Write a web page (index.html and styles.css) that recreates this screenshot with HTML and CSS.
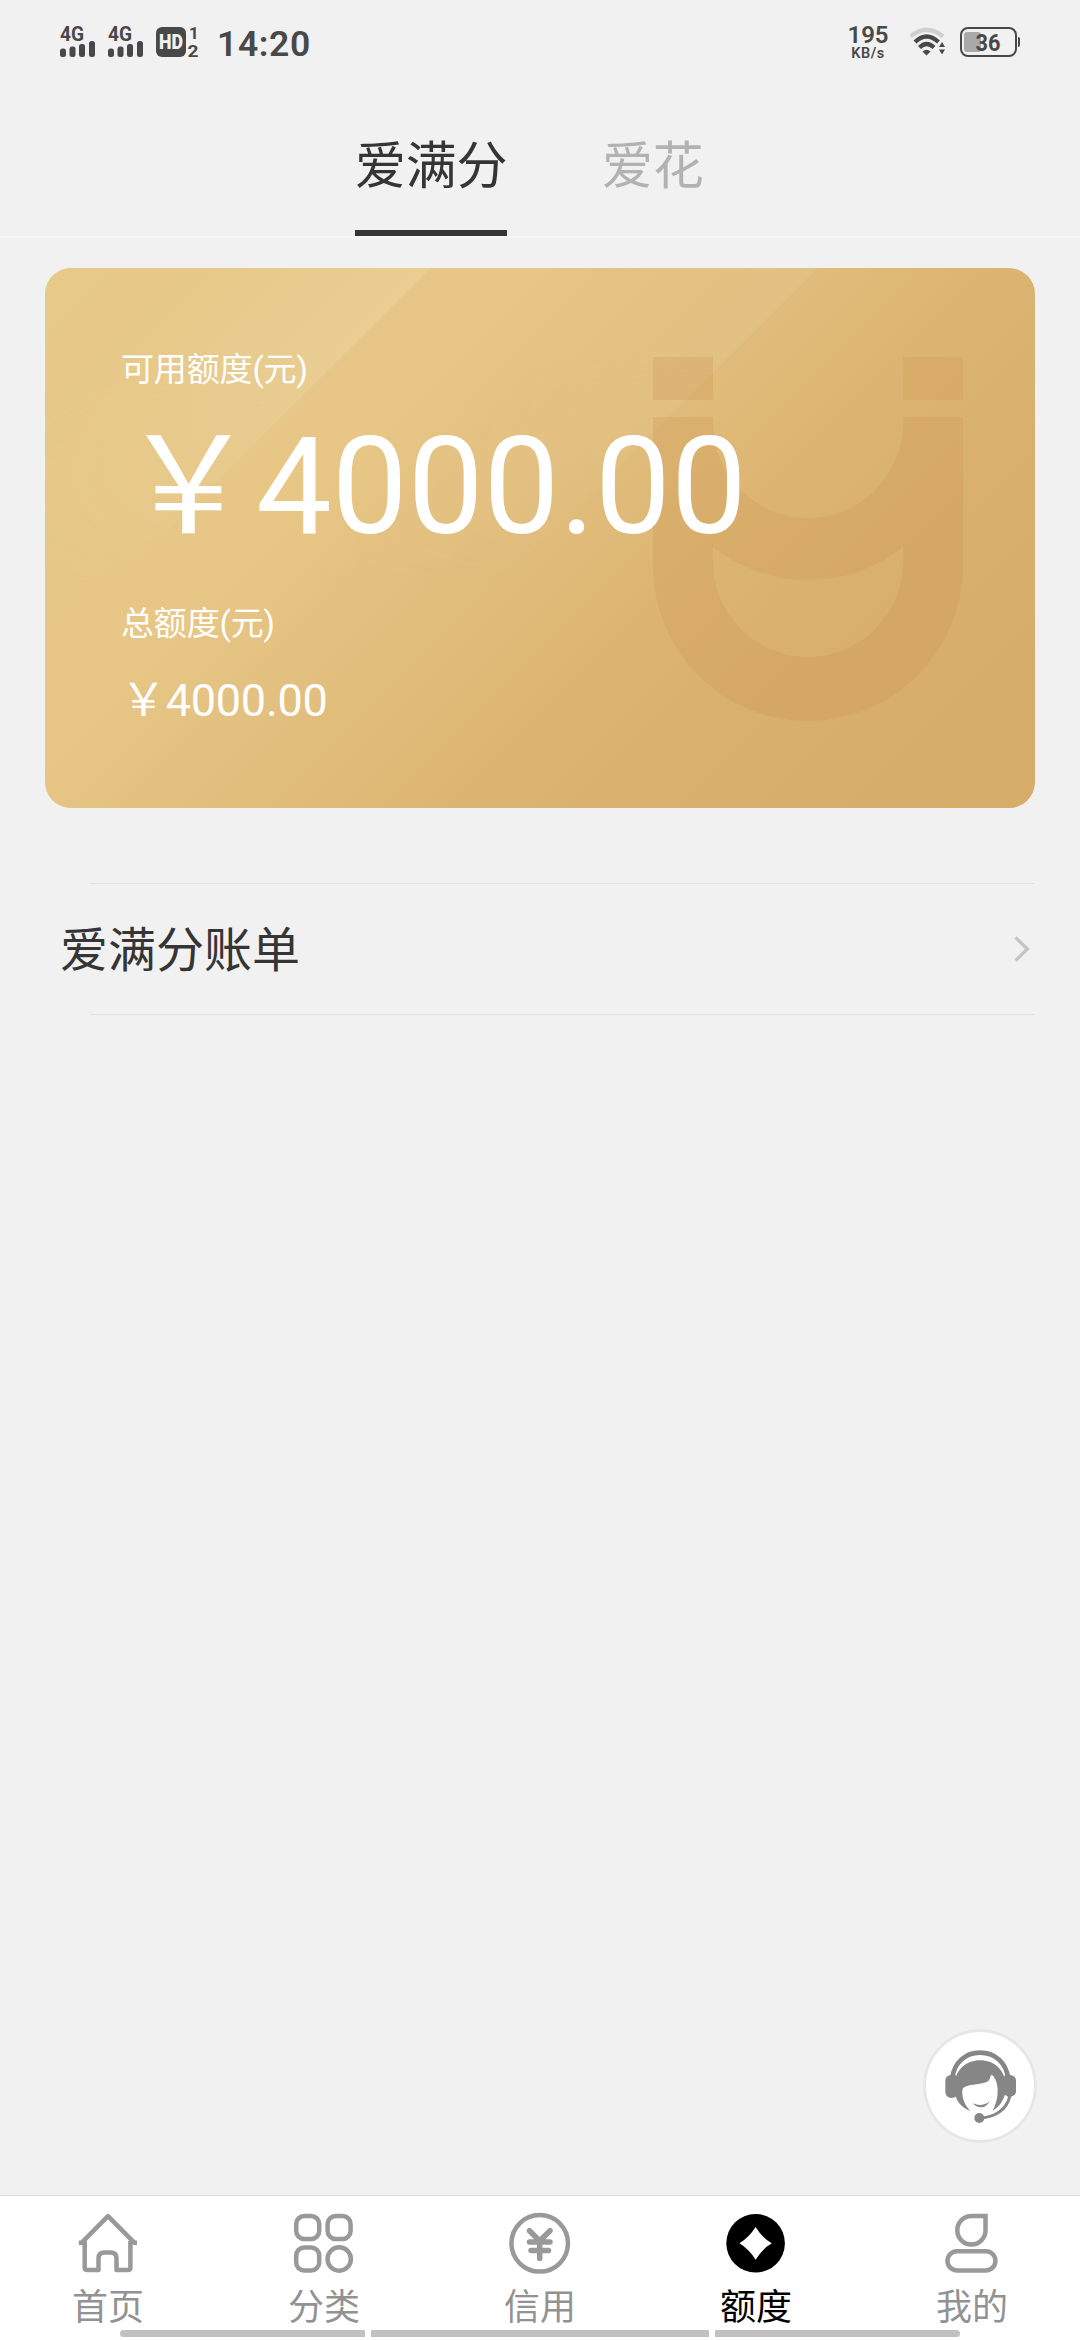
FILE: index.html
```html
<!DOCTYPE html>
<html lang="zh-CN">
<head>
<meta charset="utf-8">
<title>额度</title>
<link rel="stylesheet" href="styles.css">
</head>
<body>
<div class="screen">
  <header class="status">
    <svg class="signal" viewBox="0 0 36 38"><text class="net" x="0" y="18" textLength="24" lengthAdjust="spacingAndGlyphs">4G</text><rect x="0" y="25.500" width="6" height="8.500" rx="2.500"/><rect x="9.500" y="23.500" width="6" height="10.500" rx="2.500"/><rect x="19" y="21" width="6" height="13" rx="2.500"/><rect x="29" y="18" width="6" height="16" rx="2.500"/></svg>
    <svg class="signal signal-second" viewBox="0 0 36 38"><text class="net" x="0" y="18" textLength="24" lengthAdjust="spacingAndGlyphs">4G</text><rect x="0" y="25.500" width="6" height="8.500" rx="2.500"/><rect x="9.500" y="23.500" width="6" height="10.500" rx="2.500"/><rect x="19" y="21" width="6" height="13" rx="2.500"/><rect x="29" y="18" width="6" height="16" rx="2.500"/></svg>
    <svg class="hd" viewBox="0 0 44 38"><rect x="0" y="4" width="30" height="30" rx="6"/><text class="hd-text" x="3" y="26" textLength="24" lengthAdjust="spacingAndGlyphs">HD</text><text class="hd-num" x="33" y="16">1</text><text class="hd-num" x="31.500" y="33.500" textLength="11" lengthAdjust="spacingAndGlyphs">2</text></svg>
    <span class="clock">14:20</span>
    <div class="speed"><span class="speed-num">195</span><span class="speed-unit">KB/s</span></div>
    <svg class="wifi" viewBox="0 0 38 30"><g fill="none" stroke-width="4.200"><path d="M1.500 9.500 Q17.500 -4 34 9.500" stroke="#d0d0d0"/><path d="M6 15 Q17.500 4 29.500 15" stroke="#484848"/><path d="M10.500 20.500 Q17.500 13.500 25 20.500" stroke="#484848"/></g><path d="M13.500 24.500 Q17.500 21 21.500 24.500 L17.500 28.500Z"/><path d="M30 20 L33 15 L36 20ZM30 22.500 L33 27.500 L36 22.500Z"/></svg>
    <svg class="battery" viewBox="0 0 60 30"><rect x="4" y="5" width="17" height="20" rx="3" fill="#a9a9a9"/><rect x="1" y="1" width="55" height="28" rx="7" fill="none" stroke="#484848" stroke-width="2"/><path d="M58 10 q2 0 2 2 v6 q0 2 -2 2z"/><text class="level" x="15.500" y="23.500" textLength="25" lengthAdjust="spacingAndGlyphs">36</text></svg>
  </header>

  <nav class="tabs">
    <span class="tab tab-active">爱满分</span>
    <span class="tab">爱花</span>
  </nav>

  <main class="content">
    <section class="card">
      <svg class="card-logo" viewBox="0 0 310 364"><path d="M0 0H60V43H0ZM250 0H310V43H250ZM0 60H60V66A95 95 0 0 0 250 66V60H310V209A155 155 0 0 1 0 209ZM60 190V205A95 95 0 0 0 250 205V190A152.500 152.500 0 0 1 60 190Z" fill-rule="evenodd"/></svg>
      <p class="card-label">可用额度(元)</p>
      <p class="amount">&#xFFE5;4000.00</p>
      <p class="card-label card-label-total">总额度(元)</p>
      <p class="total">&#xFFE5;4000.00</p>
    </section>

    <a class="bill">
      <span>爱满分账单</span>
      <svg class="chevron" viewBox="0 0 16 26"><path d="M1.500 1.500 L13.500 13 L1.500 24.500"/></svg>
    </a>
  </main>

  <a class="service">
    <svg viewBox="68 59 342 342"><path class="stroke" d="M156 205 C162 160 195 130 239 130 C284 130 317 160 323 205" stroke-width="14"/><path d="M150 197 H163 Q169 197 169 204 V258 Q166 266 152 266 Q135 263 135 248 V212 Q136 200 150 197ZM328 196 H317 Q311 198 311 204 V252 Q313 259 324 262 H332 Q347 259 347 246 V212 Q346 199 328 196Z"/><path d="M164 220 C166 180 200 153 239 153 C280 153 312 180 315 220 V252 C309 275 295 295 277 304 C293 275 300 228 279 200 Q271 193 270 203 C267 217 259 220 238 223 C212 227 188 228 186 242 C184 268 194 288 210 305 C188 297 171 280 166 260Z"/><path d="M218 282 Q244 295 268 276 Q258 294 243 294 Q226 294 218 282Z"/><path class="stroke" d="M329 258 C320 300 286 324 240 326" stroke-width="9"/><circle cx="237" cy="326" r="15"/></svg>
  </a>

  <footer class="tabbar">
    <a class="item"><svg viewBox="0 0 72 72"><path d="M6.800 34.800 H9.500 L36 8.200 L62.500 34.800 H65M12.700 33 V59.500 Q12.700 62 15.500 62 H26.500 V50.500 Q26.500 44.500 32.500 44.500 H38.500 Q44.500 44.500 44.500 50.500 V62 H55.700 Q58.400 62 58.400 59.500 V33" stroke-linejoin="round"/></svg><span>首页</span></a>
    <a class="item"><svg viewBox="0 0 72 72"><rect x="8.200" y="8" width="23" height="23" rx="8"/><rect x="39.600" y="8" width="23" height="23" rx="8"/><rect x="8.200" y="39.500" width="23" height="23" rx="8"/><circle cx="51.200" cy="51" r="11.700"/></svg><span>分类</span></a>
    <a class="item"><svg viewBox="0 0 72 72"><circle cx="35.700" cy="35.300" r="28.300"/><path class="yen" d="M25.500 22.700 L35.700 33 L46 22.700M25.500 34 H46M27 42.500 H44.500M35.700 34 V50.500"/></svg><span>信用</span></a>
    <a class="item item-active"><svg viewBox="0 0 72 72"><circle class="solid" cx="35.600" cy="35.300" r="29.300"/><path class="hole" d="M35.600 19 Q42 29.500 51.800 35.300 Q42 41 35.600 51.800 Q29 41 19.400 35.300 Q29 29.500 35.600 19Z"/></svg><span>额度</span></a>
    <a class="item"><svg viewBox="0 0 72 72"><path d="M35.400 8 H49.500 V22.300 A14.100 14.300 0 1 1 35.400 8Z"/><rect x="11.500" y="43.200" width="47.900" height="19.300" rx="9.600"/></svg><span>我的</span></a>
  </footer>
  <div class="gesture"><i></i><i></i><i></i></div>
</div>
</body>
</html>
```
FILE: styles.css
```css
* { box-sizing: border-box; }
body { margin: 0; background: #f1f1f1; }
p { margin: 0; }
.screen {
  position: relative;
  display: flex;
  flex-direction: column;
  width: 1080px;
  height: 2340px;
  background: #f1f1f1;
  color: #353535;
  font-family: Roboto, "Noto Sans CJK SC", sans-serif;
}

.status {
  display: flex;
  align-items: center;
  height: 84px;
  padding: 0 60px;
  color: #484848;
}
.status svg { display: block; flex: none; fill: #484848; overflow: visible; }
.signal { width: 36px; height: 38px; }
.signal-second { margin-left: 12px; }
.hd { width: 44px; height: 38px; margin-left: 12px; }
.net { font-size: 20px; font-weight: 700; }
.hd-text { font-size: 20px; font-weight: 900; fill: #f1f1f1; }
.hd-num { font-size: 17px; font-weight: 700; }
.clock { margin: 3px 0 0 17px; font-size: 35.500px; font-weight: 600; line-height: 40px; letter-spacing: .6px; }
.speed { display: flex; flex-direction: column; align-items: center; width: 42px; margin-left: auto; margin-right: 20px; }
.speed-num { margin-top: -1px; font-size: 24px; font-weight: 600; line-height: 24px; }
.speed-unit { font-size: 14.500px; font-weight: 600; line-height: 14px; letter-spacing: .5px; }
.wifi { width: 38px; height: 30px; margin-right: 13px; }
.battery { width: 60px; height: 30px; }
.level { font-size: 24px; font-weight: 700; }

.tabs {
  display: flex;
  gap: 95px;
  height: 154px;
  padding-left: 355px;
  border-bottom: 2px solid #f5f5f5;
}
.tab { height: 152px; padding-top: 47px; font-size: 51px; line-height: 72px; color: #b2b2b2; letter-spacing: -.2px; }
.tab-active { width: 152px; color: #353535; border-bottom: 6px solid #353535; white-space: nowrap; }

.content { flex: 1; padding: 30px 45px 0; }
.card {
  position: relative;
  height: 540px;
  padding: 78px 76px 0;
  border-radius: 26px;
  overflow: hidden;
  color: #fff;
  background: linear-gradient(135deg, #e7c988 0%, #e7c686 32%, #e2bf7e 45%, #ddb673 60%, #d8af6c 77%, #d6ac69 100%);
}
.card::before {
  content: "";
  position: absolute;
  inset: 0;
  background: linear-gradient(135deg, transparent 8%, rgba(240, 226, 185, .26) 25.100%, transparent 25.300%, transparent 36%, rgba(238, 216, 178, .19) 50.400%, transparent 50.600%);
  -webkit-mask-image: linear-gradient(#000 0, #000 15%, transparent 60%);
  mask-image: linear-gradient(#000 0, #000 15%, transparent 60%);
}
.card-logo { position: absolute; left: 608px; top: 89px; width: 310px; height: 364px; fill: rgba(206, 145, 80, .26); }
.card p { position: relative; white-space: nowrap; }
.card-label { height: 48px; font-size: 33px; line-height: 48px; letter-spacing: -.15px; }
.amount { height: 160px; margin-top: 13px; font-size: 135px; line-height: 160px; }
.card-label-total { margin-top: 33px; }
.total { height: 54px; margin-top: 26px; font-size: 45px; line-height: 54px; letter-spacing: -.25px; }

.bill {
  display: flex;
  align-items: center;
  justify-content: space-between;
  height: 132px;
  margin-top: 75px;
  padding: 0 5px 0 15px;
  font-size: 48px;
  line-height: 72px;
  background: linear-gradient(#e2e2e2, #e2e2e2) 45px 0 / 945px 1px no-repeat, linear-gradient(#e2e2e2, #e2e2e2) 45px 131px / 945px 1px no-repeat;
}
.bill span { margin-top: 3px; }
.chevron { width: 16px; height: 26px; fill: none; stroke: #c4c4c4; stroke-width: 3.200; }

.service {
  position: absolute;
  left: 923px;
  top: 2029px;
  width: 114px;
  height: 114px;
  border-radius: 50%;
  background: #fff;
  box-shadow: inset 0 0 0 3px #e6e6e6;
}
.service svg { display: block; width: 114px; height: 114px; fill: #868686; }
.service .stroke { fill: none; stroke: #868686; }

.tabbar {
  display: grid;
  grid-template-columns: repeat(5, 1fr);
  height: 145px;
  border-top: 1px solid #dadada;
  background: #fff;
}
.item { display: flex; flex-direction: column; align-items: center; padding-top: 12px; color: #929292; font-size: 36px; line-height: 56px; }
.item svg { display: block; width: 72px; height: 72px; fill: none; stroke: #999; stroke-width: 4.500; }
.item .yen { stroke-width: 5.500; stroke-linecap: round; }
.item .solid { fill: #000; stroke: none; }
.item .hole { fill: #fff; stroke: none; }
.item-active { color: #000; }

.gesture { position: absolute; left: 120px; top: 2330px; display: grid; grid-template-columns: 245px 338px 245px; column-gap: 6px; height: 7px; }
.gesture i { background: #c1c1c1; }
.gesture i:first-child { border-radius: 4px 0 0 4px; }
.gesture i:last-child { border-radius: 0 4px 4px 0; }
```
